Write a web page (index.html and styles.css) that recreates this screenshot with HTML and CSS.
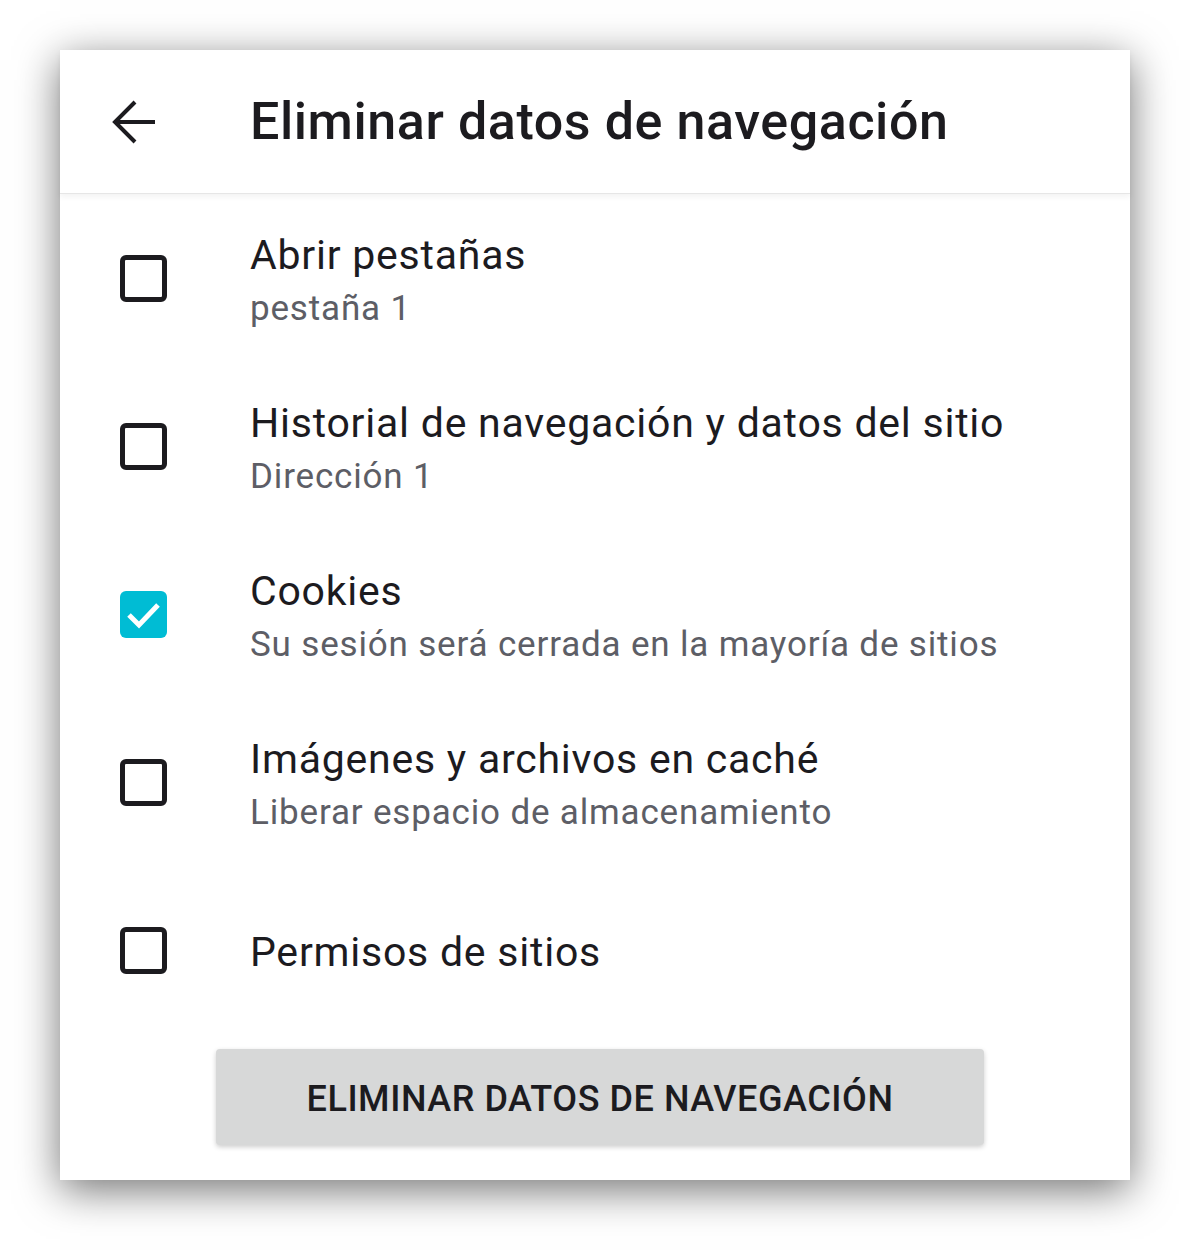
FILE: index.html
```html
<!DOCTYPE html>
<html lang="es">
<head>
<meta charset="utf-8">
<title>Eliminar datos de navegación</title>
<link rel="stylesheet" href="styles.css">
</head>
<body>
<div class="panel">
  <header class="bar">
    <button class="back" aria-label="Atrás">
      <svg width="44" height="44" viewBox="0 0 44 44"><path d="M43 22H4 M23 2L3 22L23 42" fill="none" stroke="#1c1b1f" stroke-width="4"/></svg>
    </button>
    <h1 class="title">Eliminar datos de navegación</h1>
  </header>
  <ul class="list">
    <li class="item">
      <span class="box"></span>
      <div class="text"><div class="primary">Abrir pestañas</div><div class="secondary">pestaña 1</div></div>
    </li>
    <li class="item">
      <span class="box"></span>
      <div class="text"><div class="primary">Historial de navegación y datos del sitio</div><div class="secondary">Dirección 1</div></div>
    </li>
    <li class="item">
      <span class="box checked"><svg width="47" height="47" viewBox="0 0 47 47"><path d="M9 24L19 34L38 14" fill="none" stroke="#fff" stroke-width="5"/></svg></span>
      <div class="text"><div class="primary">Cookies</div><div class="secondary">Su sesión será cerrada en la mayoría de sitios</div></div>
    </li>
    <li class="item">
      <span class="box"></span>
      <div class="text"><div class="primary">Imágenes y archivos en caché</div><div class="secondary">Liberar espacio de almacenamiento</div></div>
    </li>
    <li class="item">
      <span class="box"></span>
      <div class="text"><div class="primary">Permisos de sitios</div></div>
    </li>
  </ul>
  <div class="actions">
    <button class="clear">ELIMINAR DATOS DE NAVEGACIÓN</button>
  </div>
</div>
</body>
</html>
```
FILE: styles.css
```css
html, body { margin: 0; padding: 0; background: #ffffff; }
body { font-family: Roboto, "Noto Sans", sans-serif; color: #1c1b1f; padding: 50px 60px 70px; }
.panel {
  width: 1070px; height: 1130px; background: #fff;
  box-shadow: 0 10px 40px rgba(0,0,0,0.55);
  display: flex; flex-direction: column;
}
.bar {
  height: 143px; display: flex; align-items: center;
  border-bottom: 1px solid #e6e6e6;
  box-shadow: 0 3px 6px rgba(0,0,0,0.05);
  position: relative; z-index: 1;
}
.back {
  border: 0; background: none; padding: 0; margin-left: 52px; width: 44px; height: 44px;
  display: flex; align-items: center; justify-content: center;
}
.title { margin: 0 0 0 94px; font-size: 52px; font-weight: 500; letter-spacing: 0.58px; color: #1c1b1f; }
.list { list-style: none; margin: 0; padding: 0; }
.item { height: 168px; display: flex; align-items: center; }
.box {
  width: 47px; height: 47px; box-sizing: border-box; border: 5px solid #1c1b1f; border-radius: 6px;
  margin-left: 60px; flex: none; display: flex; align-items: center; justify-content: center;
}
.box.checked { background: #00bcd4; border: 0; }
.text { margin-left: 83px; padding-top: 3px; }
.primary { font-size: 41px; line-height: 52px; color: #1c1b1f; letter-spacing: 0.77px; }
.secondary { font-size: 35px; line-height: 44px; margin-top: 6px; color: #5d5e66; letter-spacing: 0.83px; }
.actions { display: flex; justify-content: center; padding-top: 15px; padding-left: 10px; }
.clear {
  width: 768px; height: 96px; border: 0; border-radius: 4px; background: #d7d8d8;
  box-shadow: 0 2px 5px rgba(0,0,0,0.2); padding: 4px 0 0;
  font-family: Roboto, sans-serif; font-size: 36px; font-weight: 500; color: #1c1b1f; letter-spacing: 0.55px;
}
```
